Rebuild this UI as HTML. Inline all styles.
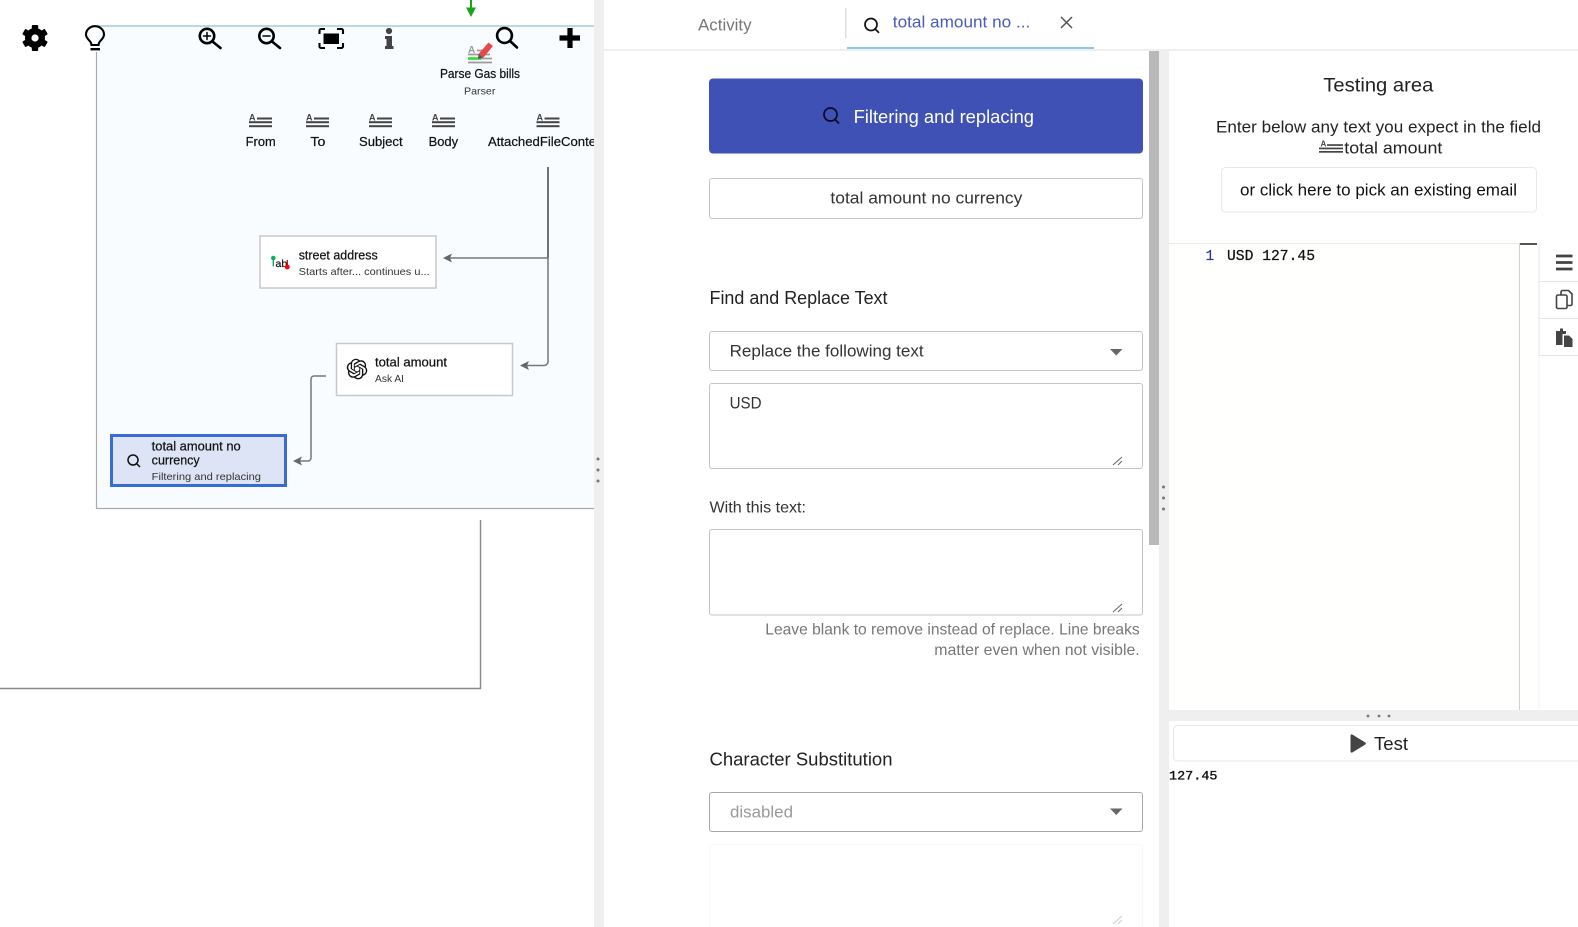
<!DOCTYPE html>
<html lang="en">
<head>
<meta charset="utf-8">
<title>Filtering and replacing</title>
<style>
html,body{margin:0;padding:0;background:#fff;width:1578px;height:927px;overflow:hidden}
svg{display:block}
text{font-family:"Liberation Sans",Arial,sans-serif;white-space:pre}
.m{font-family:"Liberation Mono",monospace}
.n{font-size:12.5px;fill:#111;stroke:#111;stroke-width:.22px}
.s{font-size:10.5px;fill:#333}
.f{font-size:16.5px;fill:#333}
.h{font-size:18px;fill:#222}
</style>
</head>
<body>
<svg xmlns="http://www.w3.org/2000/svg" width="1578" height="927" viewBox="0 0 1578 927">
<defs>
<pattern id="dots" width="8" height="8" patternUnits="userSpaceOnUse"><rect x="3" y="3" width="1" height="1" fill="#f6f6f6"/></pattern>
<clipPath id="clipL"><rect x="0" y="0" width="594" height="927"/></clipPath>
</defs>

<!-- left canvas -->
<rect x="0" y="0" width="594" height="927" fill="#fff"/>
<rect x="0" y="0" width="594" height="927" fill="url(#dots)"/>
<rect x="96" y="26" width="498" height="482" fill="#f9fcff"/>
<rect x="92" y="25" width="502" height="2" fill="#bcd7e2"/>
<path d="M96.500 52V508.500H594" fill="none" stroke="#aaa" stroke-width="1.200"/>
<path d="M480.500 520V688.500H0" fill="none" stroke="#888" stroke-width="1.400"/>

<!-- separator -->
<rect x="594" y="0" width="10" height="927" fill="#efefef"/>
<circle cx="598" cy="459" r="1.500" fill="#777"/><circle cx="598" cy="470" r="1.500" fill="#777"/><circle cx="598" cy="481" r="1.500" fill="#777"/>

<!-- toolbar: gear -->
<g transform="translate(35 38)" fill="#000">
<circle r="6.800" fill="none" stroke="#000" stroke-width="6.400"/>
<rect x="-3.200" y="-13" width="6.400" height="5.500" rx="1"/>
<rect x="-3.200" y="-13" width="6.400" height="5.500" rx="1" transform="rotate(60)"/>
<rect x="-3.200" y="-13" width="6.400" height="5.500" rx="1" transform="rotate(120)"/>
<rect x="-3.200" y="-13" width="6.400" height="5.500" rx="1" transform="rotate(180)"/>
<rect x="-3.200" y="-13" width="6.400" height="5.500" rx="1" transform="rotate(240)"/>
<rect x="-3.200" y="-13" width="6.400" height="5.500" rx="1" transform="rotate(300)"/>
</g>
<!-- bulb -->
<path d="M91.500 45C91.500 40.500 86 39.500 86 34.500a9 8.300 0 0 1 18 0C104 39.500 98.500 40.500 98.500 45Z" fill="#fff" fill-opacity=".4" stroke="#000" stroke-width="2.100"/>
<rect x="90.500" y="48" width="9.500" height="2.400" fill="#000"/>
<!-- zoom icons -->
<g fill="none" stroke="#000" stroke-width="2.600" stroke-linecap="round">
<circle cx="207" cy="36" r="7.200"/><path d="M212.500 41.500L220.500 48"/>
<path d="M203.500 36h7M207 32.500v7" stroke-width="1.500"/>
<circle cx="266.500" cy="36" r="7.200"/><path d="M272 41.500L280 48"/>
<path d="M263 36h7" stroke-width="1.500"/>
<circle cx="504.500" cy="35.500" r="7.400"/><path d="M510 41L517 47.500"/>
</g>
<!-- fit -->
<path d="M319.500 34v-3.500a1.500 1.500 0 0 1 1.500-1.500h4M337 29h4.500a1.500 1.500 0 0 1 1.500 1.500V34M343 43v3.500a1.500 1.500 0 0 1-1.500 1.500H337M325 48h-4a1.500 1.500 0 0 1-1.500-1.500V43" fill="none" stroke="#000" stroke-width="2.100"/>
<rect x="323.500" y="33.500" width="15.500" height="10.500" fill="#000"/>
<!-- info -->
<g fill="#444"><circle cx="389" cy="31" r="3.100"/><path d="M385 36h7v10h1.500v3h-8.500v-3h1.500v-7H385z"/></g>
<!-- plus -->
<path d="M559.500 38h20.500M570 28v20" stroke="#000" stroke-width="5.200" fill="none"/>
<!-- green arrow -->
<path d="M471 0v10" stroke="#1fa01f" stroke-width="2"/><path d="M466 7.500h10L471 17z" fill="#1fa01f"/>
<!-- parser icon -->
<text x="468" y="53" font-size="10" font-weight="700" fill="#999">A</text>
<path d="M477 50.500h12M468 54.500h22M468 62.500h24" stroke="#999" stroke-width="1.700"/>
<path d="M468 58.500h13" stroke="#35d635" stroke-width="2.600"/><path d="M481 58.500h11" stroke="#999" stroke-width="1.700"/>
<path d="M488.500 42.500l4.500 3.500-9.500 11.500-5-3.500z" fill="#e8474a"/><path d="M478.500 54l5 3.500-5.500 1.500z" fill="#555"/>
<text x="440" y="78" class="n" textLength="80" lengthAdjust="spacingAndGlyphs">Parse Gas bills</text>
<text x="464" y="94.500" class="s" textLength="31.400" lengthAdjust="spacingAndGlyphs">Parser</text>

<!-- field icons -->
<g fill="#444" stroke="none">
<g transform="translate(249 113)"><text x="0" y="7.500" font-size="9" font-weight="700">A</text><rect x="8" y="4.500" width="15" height="2"/><rect x="0" y="8.200" width="23" height="2"/><rect x="0" y="12.200" width="23" height="2"/></g>
<g transform="translate(306 113)"><text x="0" y="7.500" font-size="9" font-weight="700">A</text><rect x="8" y="4.500" width="15" height="2"/><rect x="0" y="8.200" width="23" height="2"/><rect x="0" y="12.200" width="23" height="2"/></g>
<g transform="translate(369 113)"><text x="0" y="7.500" font-size="9" font-weight="700">A</text><rect x="8" y="4.500" width="15" height="2"/><rect x="0" y="8.200" width="23" height="2"/><rect x="0" y="12.200" width="23" height="2"/></g>
<g transform="translate(432 113)"><text x="0" y="7.500" font-size="9" font-weight="700">A</text><rect x="8" y="4.500" width="15" height="2"/><rect x="0" y="8.200" width="23" height="2"/><rect x="0" y="12.200" width="23" height="2"/></g>
<g transform="translate(536.500 113)"><text x="0" y="7.500" font-size="9" font-weight="700">A</text><rect x="8" y="4.500" width="15" height="2"/><rect x="0" y="8.200" width="23" height="2"/><rect x="0" y="12.200" width="23" height="2"/></g>
</g>
<text x="245.700" y="146" class="n" textLength="30" lengthAdjust="spacingAndGlyphs">From</text>
<text x="310.400" y="146" class="n" textLength="15" lengthAdjust="spacingAndGlyphs">To</text>
<text x="359" y="146" class="n" textLength="43.600" lengthAdjust="spacingAndGlyphs">Subject</text>
<text x="428.600" y="146" class="n" textLength="29.500" lengthAdjust="spacingAndGlyphs">Body</text>
<g clip-path="url(#clipL)"><text x="488" y="146" class="n" textLength="119" lengthAdjust="spacingAndGlyphs">AttachedFileContent</text></g>

<!-- connectors -->
<path d="M548 167V258" stroke="#444" stroke-width="1.500" fill="none"/>
<path d="M548 258V361a4 4 0 0 1-4 4.500H526M548 258H449" stroke="#777" stroke-width="1.500" fill="none"/>
<path d="M443 258l9-4.500-2 4.500 2 4.500z" fill="#666"/>
<path d="M520 365.500l9-4.500-2 4.500 2 4.500z" fill="#666"/>
<path d="M326 376H314a3 3 0 0 0-3 3V458a3 3 0 0 1-3 3H299" stroke="#777" stroke-width="1.500" fill="none"/>
<path d="M293 461l9-4.500-2 4.500 2 4.500z" fill="#666"/>

<!-- node: street address -->
<rect x="260" y="236" width="176" height="52" fill="#fff" stroke="#c8c8c8" stroke-width="1.500"/>
<path d="M273.300 258v8.500" stroke="#0a9b50" stroke-width="1.300"/><circle cx="273.300" cy="258" r="2.300" fill="#10b060"/>
<text x="275.500" y="267" font-size="10.500" fill="#111" stroke="#111" stroke-width=".2">ab</text>
<path d="M287.300 260v7" stroke="#d00" stroke-width="1.300"/><circle cx="287.300" cy="267" r="2.400" fill="#f00"/>
<text x="298.700" y="259.500" class="n" textLength="79" lengthAdjust="spacingAndGlyphs">street address</text>
<text x="298.700" y="275" class="s" textLength="131" lengthAdjust="spacingAndGlyphs">Starts after... continues u...</text>

<!-- node: total amount -->
<rect x="336.500" y="343.500" width="176" height="52" fill="#fff" stroke="#c8c8c8" stroke-width="1.500"/>
<path transform="translate(346.700 358.700) scale(.86)" fill="#111" d="M22.2819 9.8211a5.9847 5.9847 0 0 0-.5157-4.9108 6.0462 6.0462 0 0 0-6.5098-2.9A6.0651 6.0651 0 0 0 4.9807 4.1818a5.9847 5.9847 0 0 0-3.9977 2.9 6.0462 6.0462 0 0 0 .7427 7.0966 5.98 5.98 0 0 0 .511 4.9107 6.051 6.051 0 0 0 6.5146 2.9001A5.9847 5.9847 0 0 0 13.2599 24a6.0557 6.0557 0 0 0 5.7718-4.2058 5.9894 5.9894 0 0 0 3.9977-2.9001 6.0557 6.0557 0 0 0-.7475-7.0729zm-9.022 12.6081a4.4755 4.4755 0 0 1-2.8764-1.0408l.1419-.0804 4.7783-2.7582a.7948.7948 0 0 0 .3927-.6813v-6.7369l2.02 1.1686a.071.071 0 0 1 .038.052v5.5826a4.504 4.504 0 0 1-4.4945 4.4944zm-9.6607-4.1254a4.4708 4.4708 0 0 1-.5346-3.0137l.142.0852 4.783 2.7582a.7712.7712 0 0 0 .7806 0l5.8428-3.3685v2.3324a.0804.0804 0 0 1-.0332.0615L9.74 19.9502a4.4992 4.4992 0 0 1-6.1408-1.6464zM2.3408 7.8956a4.485 4.485 0 0 1 2.3655-1.9728V11.6a.7664.7664 0 0 0 .3879.6765l5.8144 3.3543-2.0201 1.1685a.0757.0757 0 0 1-.071 0l-4.8303-2.7865A4.504 4.504 0 0 1 2.3408 7.872zm16.5963 3.8558L13.1038 8.364 15.1192 7.2a.0757.0757 0 0 1 .071 0l4.8303 2.7913a4.4944 4.4944 0 0 1-.6765 8.1042v-5.6772a.79.79 0 0 0-.407-.667zm2.0107-3.0231l-.142-.0852-4.7735-2.7818a.7759.7759 0 0 0-.7854 0L9.409 9.2297V6.8974a.0662.0662 0 0 1 .0284-.0615l4.8303-2.7866a4.4992 4.4992 0 0 1 6.6802 4.66zM8.3065 12.863l-2.02-1.1638a.0804.0804 0 0 1-.038-.0567V6.0742a4.4992 4.4992 0 0 1 7.3757-3.4537l-.142.0805L8.704 5.459a.7948.7948 0 0 0-.3927.6813zm1.0976-2.3654l2.602-1.4998 2.6069 1.4998v2.9994l-2.5974 1.4997-2.6067-1.4997Z"/>
<text x="375" y="366.700" class="n" textLength="72" lengthAdjust="spacingAndGlyphs">total amount</text>
<text x="375" y="382" class="s" textLength="29" lengthAdjust="spacingAndGlyphs">Ask AI</text>

<!-- node: selected -->
<rect x="111.500" y="435.500" width="174" height="50" fill="#dde4f6" stroke="#3a6bd0" stroke-width="3"/>
<circle cx="133" cy="460" r="5" fill="none" stroke="#111" stroke-width="1.500"/><path d="M136.500 463.500l3.500 3.500" stroke="#111" stroke-width="1.500"/>
<text x="151.700" y="450.700" class="n" textLength="89" lengthAdjust="spacingAndGlyphs">total amount no</text>
<text x="151.700" y="464.500" class="n" textLength="48" lengthAdjust="spacingAndGlyphs">currency</text>
<text x="151.700" y="480" class="s" textLength="109.300" lengthAdjust="spacingAndGlyphs">Filtering and replacing</text>

<!-- tabs -->
<rect x="604" y="49" width="974" height="2" fill="#efefef"/>
<text x="698" y="30.500" font-size="16.500" fill="#777" textLength="53.600" lengthAdjust="spacingAndGlyphs">Activity</text>
<rect x="845" y="8" width="1.500" height="30" fill="#ddd"/>
<circle cx="871" cy="24.500" r="6" fill="none" stroke="#111" stroke-width="1.700"/><path d="M875.200 29l3.800 3.800" stroke="#111" stroke-width="1.700"/>
<text x="892.800" y="27.500" font-size="16.500" fill="#4a5bb8" textLength="137.500" lengthAdjust="spacingAndGlyphs">total amount no ...</text>
<path d="M1061 17l11 11M1072 17l-11 11" stroke="#555" stroke-width="1.500"/>
<rect x="847" y="47" width="247" height="2" fill="#8fc6e0"/>

<!-- middle scroll -->
<rect x="1149" y="51" width="10" height="494" fill="#b9b9b9"/>
<rect x="1159" y="51" width="10" height="876" fill="#efefef"/>
<circle cx="1163.500" cy="487" r="1.500" fill="#777"/><circle cx="1163.500" cy="498" r="1.500" fill="#777"/><circle cx="1163.500" cy="509" r="1.500" fill="#777"/>

<!-- form -->
<rect x="709" y="78.500" width="434" height="75" rx="4" fill="#3f51b5"/>
<circle cx="830.500" cy="114.500" r="6.500" fill="none" stroke="#0a0a20" stroke-width="1.700"/><path d="M835 119.500l4 4" stroke="#0a0a20" stroke-width="1.700"/>
<text x="853.600" y="123" font-size="18.500" fill="#fff" textLength="180.400" lengthAdjust="spacingAndGlyphs">Filtering and replacing</text>

<rect x="709.500" y="178.500" width="433" height="40" rx="2.500" fill="#fff" stroke="#c4c4c4"/>
<text x="830.400" y="203.500" class="f" textLength="192" lengthAdjust="spacingAndGlyphs">total amount no currency</text>

<text x="709.500" y="304" class="h" textLength="178" lengthAdjust="spacingAndGlyphs">Find and Replace Text</text>

<rect x="709.500" y="331.500" width="433" height="39" rx="2.500" fill="#fff" stroke="#c4c4c4"/>
<text x="729.600" y="356.500" class="f" textLength="194" lengthAdjust="spacingAndGlyphs">Replace the following text</text>
<path d="M1110 349h12.500l-6.250 6.500z" fill="#666"/>

<rect x="709.500" y="383.500" width="433" height="85" rx="2.500" fill="#fff" stroke="#c4c4c4"/>
<text x="729.600" y="408.500" class="f" textLength="32" lengthAdjust="spacingAndGlyphs">USD</text>
<path d="M1113 465l9-8M1118 465l4-4" stroke="#666" stroke-width="1"/>

<text x="709.500" y="512.500" font-size="16px" fill="#333" textLength="96.500" lengthAdjust="spacingAndGlyphs">With this text:</text>

<rect x="709.500" y="529.500" width="433" height="85.500" rx="2.500" fill="#fff" stroke="#c4c4c4"/>
<path d="M1113 612l9-8M1118 612l4-4" stroke="#666" stroke-width="1"/>

<text x="765.300" y="634.700" font-size="16px" fill="#777" textLength="374.400" lengthAdjust="spacingAndGlyphs">Leave blank to remove instead of replace. Line breaks</text>
<text x="934.300" y="655" font-size="16px" fill="#777" textLength="205.400" lengthAdjust="spacingAndGlyphs">matter even when not visible.</text>

<text x="709.500" y="765.300" class="h" textLength="183" lengthAdjust="spacingAndGlyphs">Character Substitution</text>

<rect x="709.500" y="792.500" width="433" height="39" rx="2.500" fill="#fff" stroke="#a8a8a8"/>
<text x="730" y="817.500" font-size="16.500" fill="#999" textLength="63" lengthAdjust="spacingAndGlyphs">disabled</text>
<path d="M1110 808.500h12.500l-6.250 6.500z" fill="#666"/>

<rect x="709.500" y="844.500" width="433" height="100" rx="2.500" fill="#fff" stroke="#f8f8f8"/>
<path d="M1113 924l9-8M1118 924l4-4" stroke="#ccc" stroke-width="1"/>

<!-- testing area -->
<text x="1323.300" y="91.700" font-size="19.500" fill="#222" textLength="110" lengthAdjust="spacingAndGlyphs">Testing area</text>
<text x="1216" y="132.700" class="f" style="fill:#222" textLength="325" lengthAdjust="spacingAndGlyphs">Enter below any text you expect in the field</text>
<g transform="translate(1319 139)" fill="#444"><text x="1.500" y="7.500" font-size="8" font-weight="700">A</text><rect x="8" y="5.200" width="16" height="1.700"/><rect x="0" y="8.600" width="24" height="1.700"/><rect x="0" y="12" width="24" height="1.700"/></g>
<text x="1344.300" y="153.700" class="f" style="fill:#222" textLength="98" lengthAdjust="spacingAndGlyphs">total amount</text>
<rect x="1221.500" y="167.500" width="315" height="44.500" rx="4" fill="#fff" stroke="#e8e8e8"/>
<text x="1240" y="195.700" class="f" style="fill:#111" textLength="277" lengthAdjust="spacingAndGlyphs">or click here to pick an existing email</text>

<!-- editor -->
<rect x="1169" y="243" width="409" height="467" fill="#fffffe"/>
<rect x="1169" y="243" width="409" height="1.200" fill="#eee"/>
<text x="1205.500" y="260" class="m" font-size="14.500" fill="#2a3a8a" stroke="#2a3a8a" stroke-width=".2">1</text>
<text x="1227" y="260" class="m" font-size="14.500" fill="#111" stroke="#111" stroke-width=".25" textLength="88" lengthAdjust="spacingAndGlyphs">USD 127.45</text>
<rect x="1519" y="243" width="1" height="467" fill="#d0d0d0"/>
<rect x="1520" y="243" width="17" height="2" fill="#555"/>
<rect x="1539" y="243" width="39" height="467" fill="#fff"/>
<rect x="1538.500" y="243" width="1" height="112" fill="#e4e4e4"/>
<rect x="1538.500" y="355" width="1" height="355" fill="#f3f3f3"/>
<rect x="1539" y="281" width="39" height="1" fill="#e4e4e4"/>
<rect x="1539" y="318" width="39" height="1" fill="#e4e4e4"/>
<rect x="1539" y="355" width="39" height="1" fill="#e4e4e4"/>
<path d="M1556 256h16.500M1556 262.500h16.500M1556 269h16.500" stroke="#444" stroke-width="2.800"/>
<path d="M1561 295v-3a1.500 1.500 0 0 1 1.500-1.500h6l3.500 3.500v10a1.500 1.500 0 0 1-1.500 1.500H1567" fill="none" stroke="#444" stroke-width="1.600"/>
<rect x="1556.500" y="295" width="10.500" height="13.500" rx="1.500" fill="#fff" stroke="#444" stroke-width="1.600"/>
<path d="M1556 331h4v-2.500h3v2.500h3v3h-3.500v11h-6.500z" fill="#444"/>
<path d="M1564 335.500h5l3.500 3.500v8h-8.500z" fill="#444"/>

<!-- splitter -->
<rect x="1169" y="710" width="409" height="11" fill="#efefef"/>
<circle cx="1368" cy="716" r="1.400" fill="#777"/><circle cx="1379" cy="716" r="1.400" fill="#777"/><circle cx="1389" cy="716" r="1.400" fill="#777"/>

<!-- test button -->
<rect x="1173.500" y="725.500" width="420" height="35.500" rx="4" fill="#fff" stroke="#e8e8e8"/>
<path d="M1350.500 735.500a1.200 1.200 0 0 1 1.800-1l13 8a1.200 1.200 0 0 1 0 2l-13 8a1.200 1.200 0 0 1-1.800-1z" fill="#444"/>
<text x="1374" y="750" font-size="18.500" fill="#222" textLength="34" lengthAdjust="spacingAndGlyphs">Test</text>
<text x="1169" y="779.300" class="m" font-size="13.300" fill="#111" stroke="#111" stroke-width=".35" textLength="48.500" lengthAdjust="spacingAndGlyphs">127.45</text>
</svg>
</body>
</html>
